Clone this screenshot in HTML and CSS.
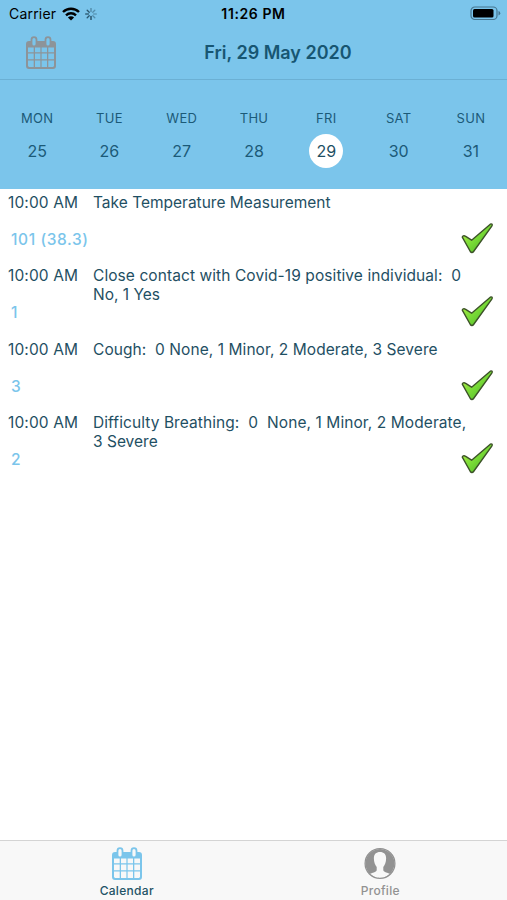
FILE: index.html
```html
<!DOCTYPE html>
<html lang="en">
<head>
<meta charset="utf-8">
<title>Calendar</title>
<link rel="stylesheet" href="styles.css">
</head>
<body>
<svg class="defs" width="0" height="0">
  <defs>
    <linearGradient id="green" x1="0" y1="0" x2="1" y2="1">
      <stop offset="0" stop-color="#c4f24a"/>
      <stop offset=".45" stop-color="#7ddd38"/>
      <stop offset="1" stop-color="#3fae22"/>
    </linearGradient>
    <symbol id="check" viewBox="0 0 34 34">
      <path d="M2.300 15.200C2.300 14 4 13.300 5.300 14.200L11.600 18.200L30.300 2.200C31.900 1.300 32.900 2.600 31.800 4.200L13.600 29.500C12.600 30.900 11.200 30.900 10.300 29.500Z" fill="url(#green)" stroke="#3c5228" stroke-width="1.400" stroke-linejoin="round"/>
    </symbol>
    <symbol id="cal" viewBox="0 0 30 33">
      <path fill="currentColor" fill-rule="evenodd" d="M3 5H4.600V3.700A3.400 3.400 0 0 1 11.400 3.700V5H18.600V3.700A3.400 3.400 0 0 1 25.400 3.700V5H27A3 3 0 0 1 30 8V30A3 3 0 0 1 27 33H3A3 3 0 0 1 0 30V8A3 3 0 0 1 3 5ZM6.400 3.700V8A1.600 1.600 0 0 0 9.600 8V3.700A1.600 1.600 0 0 0 6.400 3.700ZM20.400 3.700V8A1.600 1.600 0 0 0 23.600 8V3.700A1.600 1.600 0 0 0 20.400 3.700ZM2 11.500V16.200H7.700V11.500ZM9 11.500V16.200H14.400V11.500ZM15.600 11.500V16.200H21V11.500ZM22.300 11.500V16.200H28V11.500ZM2 17.400V23.300H7.700V17.400ZM9 17.400V23.300H14.400V17.400ZM15.600 17.400V23.300H21V17.400ZM22.300 17.400V23.300H28V17.400ZM2 24.500V30L3 31H7.700V24.500ZM9 24.500V31H14.400V24.500ZM15.600 24.500V31H21V24.500ZM22.300 24.500V31H27L28 30V24.500Z"/>
    </symbol>
  </defs>
</svg>
<div class="app">
  <div class="status">
    <div class="left">
      <span class="carrier">Carrier</span>
      <svg class="wifi" width="18" height="14" viewBox="0 0 18 14">
        <g fill="none" stroke="#000" stroke-width="2.400">
          <path d="M1 5A11.500 11.500 0 0 1 17 5"/>
          <path d="M4 8.300A7.300 7.300 0 0 1 14 8.300"/>
        </g>
        <path d="M9 13.600L5.900 10.500A4.400 4.400 0 0 1 12.100 10.500Z"/>
      </svg>
      <svg class="spin" width="12" height="12" viewBox="0 0 12 12" stroke="#173c50" stroke-width="1.300" stroke-linecap="round">
        <path d="M6 .6V3.500" opacity=".45"/>
        <path d="M9.800 2.200L7.800 4.200" opacity=".4"/>
        <path d="M11.400 6H8.500" opacity=".3"/>
        <path d="M9.800 9.800L7.800 7.800" opacity=".4"/>
        <path d="M6 11.400V8.500" opacity=".95"/>
        <path d="M2.200 9.800L4.200 7.800" opacity=".8"/>
        <path d="M.6 6H3.500" opacity=".7"/>
        <path d="M2.200 2.200L4.200 4.200" opacity=".8"/>
      </svg>
    </div>
    <div class="clock">11:26 PM</div>
    <div class="right">
      <svg width="31" height="15" viewBox="0 0 31 15">
        <rect x="1" y="1" width="26" height="12.500" rx="3.800" fill="none" stroke="#46768f" stroke-width="1.200"/>
        <rect x="3" y="3" width="20.500" height="8.500" rx="1.500"/>
        <path d="M28.500 5V9.500Q30.300 8.800 30.300 7.200T28.500 5Z" fill="#46768f"/>
      </svg>
    </div>
  </div>
  <div class="nav">
    <svg class="navcal" width="30" height="33"><use href="#cal"/></svg>
    <div class="title">Fri, 29 May 2020</div>
  </div>
  <div class="week">
    <div class="day"><span class="name">MON</span><span class="num">25</span></div>
    <div class="day"><span class="name">TUE</span><span class="num">26</span></div>
    <div class="day"><span class="name">WED</span><span class="num">27</span></div>
    <div class="day"><span class="name">THU</span><span class="num">28</span></div>
    <div class="day"><span class="name">FRI</span><span class="num on">29</span></div>
    <div class="day"><span class="name">SAT</span><span class="num">30</span></div>
    <div class="day"><span class="name">SUN</span><span class="num">31</span></div>
  </div>
  <div class="list">
    <div class="row">
      <div class="when"><span class="time">10:00 AM</span><span class="value">101 (38.3)</span></div>
      <div class="task"><span>Take Temperature Measurement</span></div>
      <svg class="tick" width="34" height="34"><use href="#check"/></svg>
    </div>
    <div class="row">
      <div class="when"><span class="time">10:00 AM</span><span class="value">1</span></div>
      <div class="task"><span class="wide">Close contact with Covid-19 positive individual:  0
</span><span>No, 1 Yes</span></div>
      <svg class="tick" width="34" height="34"><use href="#check"/></svg>
    </div>
    <div class="row">
      <div class="when"><span class="time">10:00 AM</span><span class="value">3</span></div>
      <div class="task"><span class="mid">Cough:  0 None, 1 Minor, 2 Moderate, 3 Severe</span></div>
      <svg class="tick" width="34" height="34"><use href="#check"/></svg>
    </div>
    <div class="row">
      <div class="when"><span class="time">10:00 AM</span><span class="value">2</span></div>
      <div class="task"><span class="wide">Difficulty Breathing:  0  None, 1 Minor, 2 Moderate,
</span><span>3 Severe</span></div>
      <svg class="tick" width="34" height="34"><use href="#check"/></svg>
    </div>
  </div>
  <div class="tabs">
    <div class="tab active">
      <svg width="30" height="33"><use href="#cal"/></svg>
      <span>Calendar</span>
    </div>
    <div class="tab">
      <svg width="32" height="33" viewBox="0 0 32 33">
        <circle cx="16" cy="16.500" r="14.900" fill="#f8f8f8" stroke="#929292" stroke-width="1.300"/>
        <path fill="#929292" fill-rule="evenodd" d="M16 2A14.500 14.500 0 1 1 15.900 2ZM16 5C12 5 9.700 7.500 9.900 11.500C9.900 15 11 18 12.700 20V23.300C12.200 25.500 8 25.500 5.800 27.200Q10 31 16 31T26.200 27.200C24 25.500 19.800 25.500 19.300 23.300V20C21 18 22.100 15 22.100 11.500C22.300 7.500 20 5 16 5Z"/>
      </svg>
      <span>Profile</span>
    </div>
  </div>
</div>
</body>
</html>
```
FILE: styles.css
```css
* { box-sizing: border-box; }
body { margin: 0; background: #fff; font-family: Inter, "Liberation Sans", sans-serif; color: #1f4f63; }
.defs { display: block; }
.app { width: 507px; height: 900px; display: flex; flex-direction: column; overflow: hidden; }
.status { height: 27px; background: #7bc5eb; display: grid; grid-template-columns: 1fr 80px 1fr; align-items: center; color: #000; }
.left { display: flex; align-items: center; padding-left: 9px; }
.carrier { font-size: 14px; letter-spacing: .2px; width: 53px; white-space: nowrap; }
.spin { margin-left: 5px; }
.clock { font-size: 14px; font-weight: 600; text-align: center; white-space: nowrap; letter-spacing: .6px; }
.right { display: flex; justify-content: flex-end; padding-right: 6px; }
.nav { height: 53px; background: #7bc5eb; border-bottom: 1px solid #6bb0d4; display: flex; align-items: center; padding: 0 0 2px 26px; }
.navcal { color: #8d9499; }
.title { width: 444px; text-align: center; font-size: 18px; font-weight: 600; color: #175672; }
.week { height: 109px; background: #7bc5eb; display: grid; grid-template-columns: repeat(7, 72.300px); padding: 29px 0 0 1px; }
.day { display: flex; flex-direction: column; align-items: center; gap: 7px; color: #1b5a78; }
.name { font-size: 13px; line-height: 18px; letter-spacing: .3px; }
.num { width: 34px; height: 34px; border-radius: 50%; font-size: 16px; line-height: 35px; text-align: center; }
.on { background: #fff; color: #1f4f63; }
.list { flex: 1; }
.row { height: 73.400px; display: flex; padding: 4px 13px 0 8px; font-size: 15.500px; line-height: 19px; }
.when { width: 85px; display: flex; flex-direction: column; gap: 18px; white-space: nowrap; }
.time { letter-spacing: .12px; }
.value { padding-left: 3px; color: #7bc5eb; font-weight: 500; letter-spacing: .6px; }
.task { flex: 1; display: flex; flex-direction: column; white-space: pre; }
.wide { letter-spacing: .08px; }
.mid { letter-spacing: .06px; }
.tick { margin-top: 29px; margin-left: -34px; flex: none; }
.tabs { height: 60px; background: #f8f8f8; border-top: 1px solid #d4d4d4; display: grid; grid-template-columns: 1fr 1fr; }
.tab { display: flex; flex-direction: column; align-items: center; padding-top: 6px; color: #929292; gap: 3px; }
.tab span { font-size: 12px; line-height: 16px; font-weight: 500; letter-spacing: .3px; }
.active { color: #7bc5eb; }
.active span { color: #1f5366; }
```
